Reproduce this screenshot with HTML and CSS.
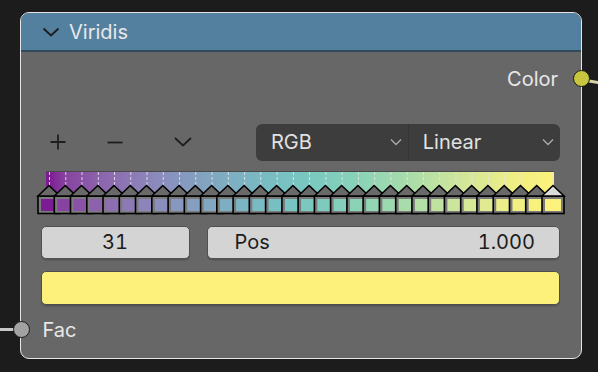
FILE: index.html
```html
<!DOCTYPE html>
<html lang="en">
<head>
  <meta charset="UTF-8" />
  <title>Viridis</title>
  <link rel="stylesheet" href="styles.css">
</head>
<body>
  <div class="node">
    <div class="header">
      <svg class="collapse" width="18" height="10" viewBox="0 0 18 10"><path d="M1.5 1.5 L9 8.5 L16.5 1.5" /></svg>
      <span class="title">Viridis</span>
    </div>

    <div class="body">
      <!-- output -->
      <div class="socket-row out">
        <span>Color</span>
        <div class="link link-out"></div>
        <div class="socket socket-color"></div>
      </div>

      <!-- ramp tools -->
      <div class="tools">
        <div class="tool"><svg width="18" height="18" viewBox="0 0 18 18"><path d="M9 1.5 V16.5 M1.5 9 H16.5" /></svg></div>
        <div class="tool tool-remove"><svg width="18" height="18" viewBox="0 0 18 18"><path d="M1.5 9.5 H16.5" /></svg></div>
        <div class="tool tool-menu"><svg width="20" height="12" viewBox="0 0 20 12"><path d="M2 2 L10 9.5 L18 2" /></svg></div>
        <div class="selects">
          <div class="select">RGB<svg width="12" height="8" viewBox="0 0 12 8"><path d="M1 1.5 L6 6.5 L11 1.5" /></svg></div>
          <div class="select">Linear<svg width="12" height="8" viewBox="0 0 12 8"><path d="M1 1.5 L6 6.5 L11 1.5" /></svg></div>
        </div>
      </div>

      <!-- color ramp -->
      <svg class="ramp" width="540" height="48" viewBox="31 168 540 48">
        <defs>
          <linearGradient id="grad" gradientUnits="userSpaceOnUse" x1="49" y1="0" x2="553" y2="0">
            <stop offset="0.000" stop-color="#7c1c94"/><stop offset="0.032" stop-color="#8843a0"/>
            <stop offset="0.065" stop-color="#8a52a6"/><stop offset="0.097" stop-color="#8c62ac"/>
            <stop offset="0.129" stop-color="#8d6eb1"/><stop offset="0.161" stop-color="#8d79b6"/>
            <stop offset="0.194" stop-color="#8c84ba"/><stop offset="0.226" stop-color="#8a8ebd"/>
            <stop offset="0.258" stop-color="#8797bf"/><stop offset="0.290" stop-color="#849fc0"/>
            <stop offset="0.323" stop-color="#81a7c1"/><stop offset="0.355" stop-color="#7eaec2"/>
            <stop offset="0.387" stop-color="#7bb4c3"/><stop offset="0.419" stop-color="#79bac3"/>
            <stop offset="0.452" stop-color="#78bfc3"/><stop offset="0.484" stop-color="#78c4c2"/>
            <stop offset="0.516" stop-color="#7ac8c0"/><stop offset="0.548" stop-color="#7ecbbe"/>
            <stop offset="0.581" stop-color="#83cfbb"/><stop offset="0.613" stop-color="#8ad3b7"/>
            <stop offset="0.645" stop-color="#93d6b3"/><stop offset="0.677" stop-color="#9dd9af"/>
            <stop offset="0.710" stop-color="#a8dcab"/><stop offset="0.742" stop-color="#b4dfa6"/>
            <stop offset="0.774" stop-color="#c0e2a1"/><stop offset="0.806" stop-color="#cce59c"/>
            <stop offset="0.839" stop-color="#d7e896"/><stop offset="0.871" stop-color="#e1ea90"/>
            <stop offset="0.903" stop-color="#eaed89"/><stop offset="0.935" stop-color="#f2ef82"/>
            <stop offset="0.968" stop-color="#f7f17d"/><stop offset="1.000" stop-color="#fdf27b"/>
          </linearGradient>
          <g id="mark">
            <rect x="-11" y="196" width="22" height="17.5" fill="#7b7b7b" stroke="#000" stroke-width="1.6"/>
            <polygon points="-11,196 0,185.5 11,196" fill="#696969" stroke="#000" stroke-width="1.6"/>
          </g>
          <g id="mark-active">
            <rect x="-11" y="196" width="22" height="17.5" fill="#7b7b7b" stroke="#000" stroke-width="1.6"/>
            <polygon points="-11,196 0,185.5 11,196" fill="#dcdcdc" stroke="#000" stroke-width="1.6"/>
          </g>
        </defs>
        <rect x="46" y="171" width="508" height="26" fill="url(#grad)"/>
        <line x1="46" y1="171.5" x2="554" y2="171.5" stroke="#4a4a4a" stroke-width="1"/>
        <g class="ticks" stroke="#e4e4e4" stroke-opacity="0.9" stroke-width="1" stroke-dasharray="3 2">
          <path d="M49.5 172V186 M65.8 172V186 M82 172V186 M98.3 172V186 M114.5 172V186 M130.8 172V186 M147 172V186 M163.3 172V186 M179.6 172V186 M195.8 172V186 M212.1 172V186 M228.3 172V186 M244.6 172V186 M260.8 172V186 M277.1 172V186 M293.4 172V186 M309.6 172V186 M325.9 172V186 M342.1 172V186 M358.4 172V186 M374.6 172V186 M390.9 172V186 M407.2 172V186 M423.4 172V186 M439.7 172V186 M455.9 172V186 M472.2 172V186 M488.4 172V186 M504.7 172V186 M521 172V186 M537.2 172V186 M553 172V186"/>
        </g>
        <use href="#mark" x="49"/><rect x="41" y="199" width="16" height="12" fill="#7c1c94"/>
        <use href="#mark" x="65.3"/><rect x="57.3" y="199" width="16" height="12" fill="#8843a0"/>
        <use href="#mark" x="81.5"/><rect x="73.5" y="199" width="16" height="12" fill="#8a52a6"/>
        <use href="#mark" x="97.8"/><rect x="89.8" y="199" width="16" height="12" fill="#8c62ac"/>
        <use href="#mark" x="114"/><rect x="106" y="199" width="16" height="12" fill="#8d6eb1"/>
        <use href="#mark" x="130.3"/><rect x="122.3" y="199" width="16" height="12" fill="#8d79b6"/>
        <use href="#mark" x="146.5"/><rect x="138.5" y="199" width="16" height="12" fill="#8c84ba"/>
        <use href="#mark" x="162.8"/><rect x="154.8" y="199" width="16" height="12" fill="#8a8ebd"/>
        <use href="#mark" x="179.1"/><rect x="171.1" y="199" width="16" height="12" fill="#8797bf"/>
        <use href="#mark" x="195.3"/><rect x="187.3" y="199" width="16" height="12" fill="#849fc0"/>
        <use href="#mark" x="211.6"/><rect x="203.6" y="199" width="16" height="12" fill="#81a7c1"/>
        <use href="#mark" x="227.8"/><rect x="219.8" y="199" width="16" height="12" fill="#7eaec2"/>
        <use href="#mark" x="244.1"/><rect x="236.1" y="199" width="16" height="12" fill="#7bb4c3"/>
        <use href="#mark" x="260.3"/><rect x="252.3" y="199" width="16" height="12" fill="#79bac3"/>
        <use href="#mark" x="276.6"/><rect x="268.6" y="199" width="16" height="12" fill="#78bfc3"/>
        <use href="#mark" x="292.9"/><rect x="284.9" y="199" width="16" height="12" fill="#78c4c2"/>
        <use href="#mark" x="309.1"/><rect x="301.1" y="199" width="16" height="12" fill="#7ac8c0"/>
        <use href="#mark" x="325.4"/><rect x="317.4" y="199" width="16" height="12" fill="#7ecbbe"/>
        <use href="#mark" x="341.6"/><rect x="333.6" y="199" width="16" height="12" fill="#83cfbb"/>
        <use href="#mark" x="357.9"/><rect x="349.9" y="199" width="16" height="12" fill="#8ad3b7"/>
        <use href="#mark" x="374.1"/><rect x="366.1" y="199" width="16" height="12" fill="#93d6b3"/>
        <use href="#mark" x="390.4"/><rect x="382.4" y="199" width="16" height="12" fill="#9dd9af"/>
        <use href="#mark" x="406.7"/><rect x="398.7" y="199" width="16" height="12" fill="#a8dcab"/>
        <use href="#mark" x="422.9"/><rect x="414.9" y="199" width="16" height="12" fill="#b4dfa6"/>
        <use href="#mark" x="439.2"/><rect x="431.2" y="199" width="16" height="12" fill="#c0e2a1"/>
        <use href="#mark" x="455.4"/><rect x="447.4" y="199" width="16" height="12" fill="#cce59c"/>
        <use href="#mark" x="471.7"/><rect x="463.7" y="199" width="16" height="12" fill="#d7e896"/>
        <use href="#mark" x="487.9"/><rect x="479.9" y="199" width="16" height="12" fill="#e1ea90"/>
        <use href="#mark" x="504.2"/><rect x="496.2" y="199" width="16" height="12" fill="#eaed89"/>
        <use href="#mark" x="520.5"/><rect x="512.5" y="199" width="16" height="12" fill="#f2ef82"/>
        <use href="#mark" x="536.7"/><rect x="528.7" y="199" width="16" height="12" fill="#f7f17d"/>
        <use href="#mark-active" x="553"/><rect x="545" y="199" width="16" height="12" fill="#fdf27b"/>
      </svg>

      <!-- active stop -->
      <div class="fields">
        <div class="field field-index">31</div>
        <div class="field field-pos"><span>Pos</span><span>1.000</span></div>
      </div>
      <div class="swatch"></div>

      <!-- input -->
      <div class="socket-row in">
        <div class="link link-in"></div>
        <div class="socket socket-fac"></div>
        <span>Fac</span>
      </div>
    </div>
  </div>
</body>
</html>
```

FILE: styles.css
```css
* {
  box-sizing: border-box;
  font-family: 'Inter', 'Noto Sans', sans-serif;
}

body {
  margin: 0;
  width: 598px;
  height: 372px;
  overflow: hidden;
  background: #1c1c1c;
}

.node {
  position: relative;
  margin: 12px 0 0 20px;
  width: 562px;
  height: 347px;
  background: #676767;
  border: 1.5px solid #e6e6e6;
  border-radius: 9px;
}

.header {
  display: flex;
  align-items: center;
  height: 39px;
  padding-left: 20.5px;
  background: #5480a0;
  border-bottom: 2px solid #2f4b5d;
  border-radius: 8px 8px 0 0;
}

.collapse {
  fill: none;
  stroke: #1e1e1e;
  stroke-width: 2;
}

.title {
  margin-left: 9.5px;
  font-size: 20px;
  color: #e8e8e8;
}

.body {
  display: flex;
  flex-direction: column;
  padding: 0 21px 0 19.5px;
}

.socket-row {
  position: relative;
  display: flex;
  align-items: center;
  height: 26px;
  font-size: 20px;
  color: #e8e8e8;
}

.socket-row.out {
  justify-content: flex-end;
  margin-top: 13.5px;
  padding-right: 2px;
}

.socket-row.in {
  margin-top: 12px;
  padding-left: 2px;
}

.socket {
  position: absolute;
  top: 4.5px;
  width: 17px;
  height: 17px;
  border-radius: 50%;
  border: 1.5px solid #1a1a1a;
}

.socket-color {
  right: -29.5px;
  background: #c8c63e;
}

.socket-fac {
  left: -28px;
  background: #a2a2a2;
}

.link {
  position: absolute;
  height: 3px;
}

.link-out {
  right: -50px;
  top: 13px;
  width: 24px;
  background: #d6d5a6;
  transform: rotate(9deg);
  transform-origin: left center;
}

.link-in {
  left: -42px;
  top: 11.5px;
  width: 24px;
  background: #c6c6c6;
}

.tools {
  display: flex;
  align-items: center;
  height: 37px;
  margin-top: 32px;
}

.tool {
  display: flex;
  align-items: center;
  justify-content: center;
  width: 34px;
  height: 37px;
}

.tool svg {
  fill: none;
  stroke: #1e1e1e;
  stroke-width: 1.8;
}

.tool-remove {
  margin-left: 23px;
}

.tool-menu {
  margin-left: 34px;
}

.selects {
  display: flex;
  margin-left: auto;
  width: 304.5px;
  height: 37px;
  border-radius: 6px;
  background: #3d3d3d;
  overflow: hidden;
}

.select {
  display: flex;
  align-items: center;
  justify-content: space-between;
  width: 50%;
  padding: 0 6px 0 15.5px;
  font-size: 20px;
  color: #e2e2e2;
}

.select + .select {
  border-left: 1px solid #353535;
  padding-left: 14px;
}

.select svg {
  fill: none;
  stroke: #a8a8a8;
  stroke-width: 1.5;
}

.ramp {
  display: block;
  margin: 7px 0 0 -10px;
}

.fields {
  display: flex;
  gap: 17px;
  margin-top: 10px;
}

.field {
  display: flex;
  align-items: center;
  height: 33px;
  border-radius: 5px;
  background: #d4d4d4;
  border: 1px solid #505050;
  box-shadow: 0 1.5px 0 #555;
  font-size: 20px;
  font-variant-numeric: tabular-nums;
  color: #1c1c1c;
}

.field-index {
  justify-content: center;
  width: 149px;
}

.field-pos {
  flex: 1;
  justify-content: space-between;
  padding: 0 24px 0 27px;
}

.swatch {
  height: 34px;
  margin-top: 12px;
  border-radius: 5px;
  background: #fdf17c;
  border: 1px solid #4e4e4e;
  box-shadow: 0 1.5px 0 #555;
}
```
